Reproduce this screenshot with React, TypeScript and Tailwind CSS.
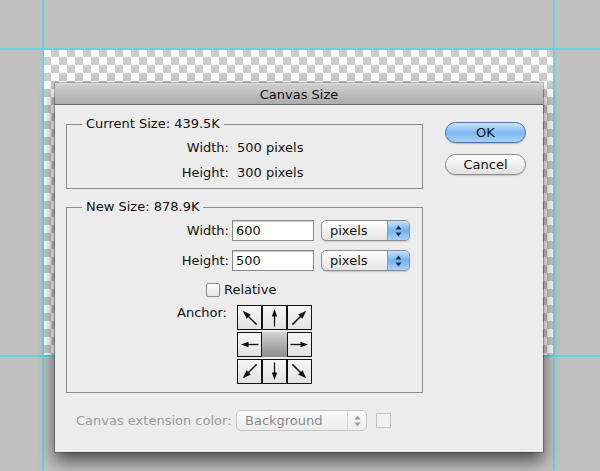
import React from "react";

const font = { fontFamily: '"DejaVu Sans", "Liberation Sans", sans-serif' };

function Arrow({ angle }: { angle: number }) {
  const diag = angle % 90 !== 0;
  const s = diag ? 1.12 : 1;
  return (
    <svg width="23" height="23" viewBox="0 0 23 23">
      <g transform={`rotate(${angle} 11.5 11.5) translate(11.5 11.5) scale(${s}) translate(-11.5 -11.5)`}>
        <line x1="11.5" y1="20.5" x2="11.5" y2="8" stroke="#111" strokeWidth="1.3" />
        <polygon points="11.5,3 8.8,10.5 14.2,10.5" fill="#111" />
      </g>
    </svg>
  );
}

function Cell({ angle }: { angle?: number }) {
  if (angle === undefined) {
    return <div className="w-[25px] h-[25px] bg-gradient-to-b from-[#d4d4d4] to-[#8c8c8c]" />;
  }
  return (
    <div className="w-[25px] h-[25px] border border-[#111] bg-gradient-to-b from-[#f7f7f7] to-[#e2e2e2] flex items-center justify-center">
      <Arrow angle={angle} />
    </div>
  );
}

function Stepper({ disabled }: { disabled?: boolean }) {
  const c = disabled ? "#9a9a9a" : "#1c2f5a";
  return (
    <svg width="7" height="12" viewBox="0 0 7 12">
      <polygon points="3.5,0.5 0.5,4.5 6.5,4.5" fill={c} />
      <polygon points="3.5,11.5 0.5,7.5 6.5,7.5" fill={c} />
    </svg>
  );
}

function Select({ value, disabled, className }: { value: string; disabled?: boolean; className: string }) {
  return (
    <div
      className={`${className} h-[21px] flex rounded-[5px] border overflow-hidden ${
        disabled
          ? "border-[#c6c6c6] bg-gradient-to-b from-[#fafafa] to-[#ececec] text-[#8a8a8a]"
          : "border-[#8c8c8c] bg-gradient-to-b from-white to-[#e4e4e4] text-[#111] shadow-[0_1px_1px_rgba(0,0,0,0.15)]"
      }`}
    >
      <div className="flex-1 flex items-center pl-[8px] text-[13px] leading-none">{value}</div>
      {disabled ? (
        <div className="w-[19px] border-l border-[#d8d8d8] flex items-center justify-center">
          <Stepper disabled />
        </div>
      ) : (
        <div className="w-[22px] border-l border-[#7d9cc4] bg-gradient-to-b from-[#c4e1fa] via-[#77b4f1] to-[#a9d2f7] flex items-center justify-center">
          <Stepper />
        </div>
      )}
    </div>
  );
}

function Field({ value }: { value: string }) {
  return (
    <div className="ml-[3px] w-[82px] h-[21px] border border-[#8a8a8a] bg-white shadow-[inset_0_1px_1px_rgba(0,0,0,0.22)] flex items-center pl-[3px] text-[13px] leading-none">
      {value}
    </div>
  );
}

export default function App() {
  return (
    <div className="relative w-[600px] h-[471px] overflow-hidden bg-[#c1c1c1] text-[#111]" style={font}>
      {/* canvas */}
      <div className="absolute left-[43px] top-[49px] w-[512px] h-[308px] bg-[image:conic-gradient(#cdcdcd_25%,#ffffff_0_50%,#cdcdcd_0_75%,#ffffff_0)] bg-[length:16px_16px]" />

      {/* guides */}
      <div className="absolute left-[42px] top-0 w-[2px] h-full bg-[#62d6d9]" />
      <div className="absolute left-[553px] top-0 w-[2px] h-full bg-[#62d6d9]" />
      <div className="absolute left-0 top-[48px] w-full h-[2px] bg-[#62d6d9]" />
      <div className="absolute left-0 top-[355px] w-full h-[2px] bg-[#62d6d9]" />

      {/* dialog */}
      <div className="absolute left-[55px] top-[83px] w-[488px] h-[369px] bg-[#ececec] flex flex-col shadow-[0_0_0_1px_rgba(0,0,0,0.25),0_9px_16px_rgba(0,0,0,0.6)]">
        <div className="h-[22px] shrink-0 border-t border-t-[#e2e2e2] border-b border-b-[#6a6a6a] bg-gradient-to-b from-[#d0d0d0] to-[#acacac] flex items-center justify-center text-[13px] leading-none">
          Canvas Size
        </div>

        <div className="flex">
          <div className="ml-[11px] mt-[11px] w-[357px] flex flex-col">
            <fieldset className="border border-[#8c8c8c]">
              <legend className="ml-[15px] px-[4px] text-[13px] leading-[16px]">Current Size: 439.5K</legend>
              <div className="pt-[8px] pb-[7px] flex flex-col gap-[9px] text-[13px] leading-[16px]">
                <div className="flex">
                  <div className="w-[162px] text-right">Width:</div>
                  <div className="ml-[8px]">500 pixels</div>
                </div>
                <div className="flex">
                  <div className="w-[162px] text-right">Height:</div>
                  <div className="ml-[8px]">300 pixels</div>
                </div>
              </div>
            </fieldset>

            <fieldset className="mt-[10px] border border-[#8c8c8c]">
              <legend className="ml-[15px] px-[4px] text-[13px] leading-[16px]">New Size: 878.9K</legend>
              <div className="pt-[5px] pb-[8px] flex flex-col text-[13px] leading-[16px]">
                <div className="flex items-center">
                  <div className="w-[162px] text-right">Width:</div>
                  <Field value="600" />
                  <Select value="pixels" className="ml-[7px] w-[89px]" />
                </div>
                <div className="mt-[9px] flex items-center">
                  <div className="w-[162px] text-right">Height:</div>
                  <Field value="500" />
                  <Select value="pixels" className="ml-[7px] w-[89px]" />
                </div>
                <div className="mt-[11px] h-[16px] flex items-center">
                  <div className="ml-[139px] w-[14px] h-[14px] rounded-[2px] border border-[#8a8a8a] bg-gradient-to-b from-white to-[#e6e6e6]" />
                  <div className="ml-[4px]">Relative</div>
                </div>
                <div className="mt-[7px] flex items-start">
                  <div className="w-[160px] text-right">Anchor:</div>
                  <div className="ml-[10px] flex flex-col gap-[2px]">
                    <div className="flex">
                      <Cell angle={-45} />
                      <Cell angle={0} />
                      <Cell angle={45} />
                    </div>
                    <div className="flex">
                      <Cell angle={-90} />
                      <Cell />
                      <Cell angle={90} />
                    </div>
                    <div className="flex">
                      <Cell angle={-135} />
                      <Cell angle={180} />
                      <Cell angle={135} />
                    </div>
                  </div>
                </div>
              </div>
            </fieldset>

            <div className="mt-[17px] ml-[10px] h-[21px] flex items-center text-[13px]">
              <div className="w-[160px] text-[#9a9a9a]">Canvas extension color:</div>
              <Select value="Background" disabled className="w-[131px]" />
              <div className="ml-[9px] w-[15px] h-[15px] border border-[#c2c2c2] bg-[#f0f0f0]" />
            </div>
          </div>

          <div className="ml-[22px] mt-[17px] flex flex-col gap-[11px]">
            <button className="w-[81px] h-[21px] rounded-full border border-[#4a72a8] bg-gradient-to-b from-[#cfe6fb] via-[#7db8f0] to-[#a6d3fa] text-[13px] leading-none shadow-[0_1px_1px_rgba(0,0,0,0.2)]">
              OK
            </button>
            <button className="w-[81px] h-[21px] rounded-full border border-[#8a8a8a] bg-gradient-to-b from-white via-[#f0f0f0] to-[#e0e0e0] text-[13px] leading-none shadow-[0_1px_1px_rgba(0,0,0,0.15)]">
              Cancel
            </button>
          </div>
        </div>
      </div>
    </div>
  );
}
